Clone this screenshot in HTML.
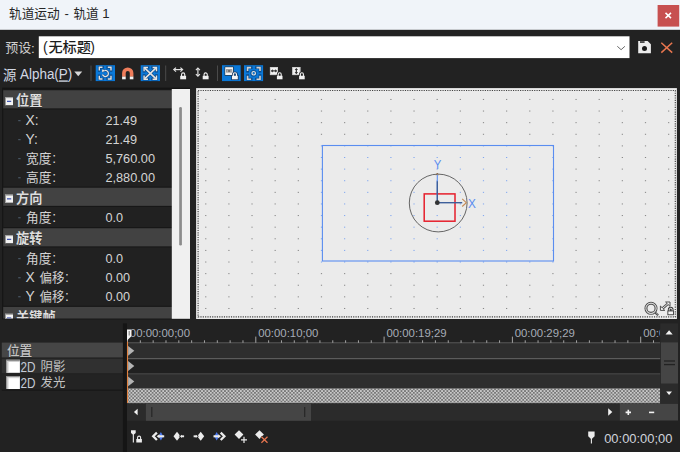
<!DOCTYPE html>
<html lang="zh"><head><meta charset="utf-8"><title>Track Motion</title>
<style>
html,body{margin:0;padding:0;background:#222222;overflow:hidden;}
body{font-family:"Liberation Sans",sans-serif;}
#win{position:relative;width:680px;height:452px;background:#222222;overflow:hidden;}
</style></head><body><div id="win">
<svg width="680" height="452" viewBox="0 0 680 452" font-family="'Liberation Sans', sans-serif" style="position:absolute;left:0;top:0;display:block"><rect x="0" y="0" width="680" height="29.8" fill="#f0f4f9" />
<text x="9" y="18.08" font-size="12.7" fill="#262626" font-family="'Liberation Sans', 'Noto Sans CJK SC', sans-serif">轨道运动</text>
<text x="64.6" y="17.8" font-size="13" fill="#262626" >-</text>
<text x="73.4" y="18.08" font-size="12.7" fill="#262626" font-family="'Liberation Sans', 'Noto Sans CJK SC', sans-serif">轨道</text>
<text x="102.2" y="18.4" font-size="13.2" fill="#262626" >1</text>
<rect x="657.6" y="5" width="21.6" height="21.6" fill="#c75050" />
<path d="M665.5 12.9L671 18.1M671 12.9L665.5 18.1" fill="none" stroke="#ffffff" stroke-width="1.5" />
<text x="5.2" y="52.14" font-size="13" fill="#cfcfcf" font-family="'Liberation Sans', 'Noto Sans CJK SC', sans-serif">预设</text>
<text x="31" y="52.5" font-size="13.5" fill="#cfcfcf" >:</text>
<rect x="38.8" y="36.3" width="590.7" height="21.8" fill="#ffffff" />
<text x="43" y="52.3" font-size="14" fill="#1c1c1c" >(</text>
<text x="48.4" y="52.1" font-size="14.2" font-weight="500" fill="#1c1c1c" font-family="'Liberation Sans', 'Noto Sans CJK SC', sans-serif">无标题</text>
<text x="90.2" y="52.3" font-size="14" fill="#1c1c1c" >)</text>
<path d="M617.3 46.3L621.1 49.7L624.9 46.3" fill="none" stroke="#6a6a6a" stroke-width="1" />
<path d="M638.2 41.1H647.6L650.9 44.3V53.3H638.2Z" fill="#ececec" />
<rect x="640" y="41.2" width="4.6" height="1.7" fill="#3a3a3a" />
<circle cx="644.5" cy="48.6" r="2.5" fill="#1a1a1a"/>
<path d="M661.3 42.8L672.2 52.6M672.2 42.8L661.3 52.6" fill="none" stroke="#e9764f" stroke-width="1.5" />
<text x="3" y="80.09" font-size="13.4" fill="#d2d8e4" font-family="'Liberation Sans', 'Noto Sans CJK SC', sans-serif">源</text>
<text x="20" y="79.4" font-size="13.8" fill="#d2d8e4" textLength="52.3" lengthAdjust="spacingAndGlyphs" >Alpha(<tspan text-decoration="underline">P</tspan>)</text>
<polygon points="74.3,71.4 82.2,71.4 78.25,76.2" fill="#d8d8d8" />
<line x1="91" y1="65.5" x2="91" y2="81" stroke="#4a4a4a" stroke-width="1" />
<line x1="165.7" y1="65.5" x2="165.7" y2="81" stroke="#4a4a4a" stroke-width="1" />
<line x1="217.5" y1="65.5" x2="217.5" y2="81" stroke="#4a4a4a" stroke-width="1" />
<rect x="95.7" y="65.2" width="19.3" height="15.9" fill="#0b79d9" />
<rect x="140.7" y="65.2" width="19.3" height="15.9" fill="#0b79d9" />
<rect x="222" y="65.2" width="18.7" height="15.9" fill="#0b79d9" />
<rect x="244" y="65.2" width="19.1" height="15.9" fill="#0b79d9" />
<path d="M99.3 70.5V67.3H102.5M107.8 67.3H111V70.5M111 75.8V79H107.8M102.5 79H99.3V75.8" fill="none" stroke="#0c3c70" stroke-width="2.7" stroke-linecap="square" opacity="0.75"/>
<path d="M99.3 70.5V67.3H102.5M107.8 67.3H111V70.5M111 75.8V79H107.8M102.5 79H99.3V75.8" fill="none" stroke="#e2e2e2" stroke-width="1.4" />
<path d="M103.2 71.3A3.05 3.05 0 1 1 102.5 74.6" fill="none" stroke="#0c3c70" stroke-width="2.6" opacity="0.7"/>
<path d="M103.2 71.3A3.05 3.05 0 1 1 102.5 74.6" fill="none" stroke="#e2e2e2" stroke-width="1.3" />
<polygon points="101.4,69.2 105.3,69.8 102.2,73" fill="#0c3c70" opacity="0.7"/>
<polygon points="101.9,69.6 105,70 102.4,72.5" fill="#e2e2e2" />
<path d="M123.9 76.7V73.1A3.85 3.85 0 0 1 131.6 73.1V76.7" fill="none" stroke="#ef7d5b" stroke-width="3.6" />
<rect x="122.1" y="76.6" width="3.6" height="2.7" fill="#f2f2f2" />
<rect x="129.8" y="76.6" width="3.6" height="2.7" fill="#f2f2f2" />
<path d="M144.8 68.1L155.8 78.6M155.8 68.1L144.8 78.6" fill="none" stroke="#0c3c70" stroke-width="2.9" opacity="0.75"/>
<path d="M144.1 71.2V67.5H148M152.6 67.5H156.5V71.2M156.5 75.5V79.2H152.6M148 79.2H144.1V75.5" fill="none" stroke="#0c3c70" stroke-width="2.7" stroke-linecap="square" opacity="0.75"/>
<path d="M144.8 68.1L155.8 78.6M155.8 68.1L144.8 78.6" fill="none" stroke="#e2e2e2" stroke-width="1.6" />
<path d="M144.1 71.2V67.5H148M152.6 67.5H156.5V71.2M156.5 75.5V79.2H152.6M148 79.2H144.1V75.5" fill="none" stroke="#e2e2e2" stroke-width="1.4" />
<path d="M174.2 69.6H182.2" fill="none" stroke="#e2e2e2" stroke-width="1.2" />
<path d="M176.0 67.6L173.8 69.6L176.0 71.6M180.4 67.6L182.6 69.6L180.4 71.6" fill="none" stroke="#e2e2e2" stroke-width="1.2" />
<path d="M181.56 76.1V74.49A1.59 1.59 0 0 1 184.74 74.49V76.1" fill="none" stroke="#f0f0f0" stroke-width="1.1" /><rect x="180.2" y="75.8" width="5.9" height="3.5" fill="#f0f0f0" />
<path d="M197.9 68.4V75.8" fill="none" stroke="#e2e2e2" stroke-width="1.2" />
<path d="M195.9 70.1L197.9 68.0L199.9 70.1M195.9 74.1L197.9 76.2L199.9 74.1" fill="none" stroke="#e2e2e2" stroke-width="1.2" />
<path d="M204.06 76.1V74.49A1.59 1.59 0 0 1 207.24 74.49V76.1" fill="none" stroke="#f0f0f0" stroke-width="1.1" /><rect x="202.7" y="75.8" width="5.9" height="3.5" fill="#f0f0f0" />
<rect x="224.6" y="66.6" width="9" height="9" fill="#2a2a2a" />
<rect x="225.2" y="67.2" width="7.8" height="7.8" fill="#f4f4f4" />
<rect x="226" y="69.4" width="6.2" height="3" fill="#6a6a6a" />
<path d="M226.6 69.9L228.6 70.9L226.6 71.9ZM231.6 69.9L229.6 70.9L231.6 71.9Z" fill="#e0e0e0" />
<path d="M233.33 76.05V74.37A1.57 1.57 0 0 1 236.47 74.37V76.05" fill="none" stroke="#1b3b60" stroke-width="2.6" /><rect x="231.2" y="74.95" width="7.4" height="5.15" fill="#1b3b60" /><path d="M233.33 76.05V74.37A1.57 1.57 0 0 1 236.47 74.37V76.05" fill="none" stroke="#f6f6f6" stroke-width="1.1" /><rect x="232" y="75.75" width="5.8" height="3.55" fill="#f6f6f6" />
<path d="M247.6 71.1V67.6H251.1M256.5 67.6H260V71.1M260 75.7V79.2H256.5M251.1 79.2H247.6V75.7" fill="none" stroke="#0c3c70" stroke-width="2.8" stroke-linecap="square" opacity="0.75"/>
<path d="M247.6 71.1V67.6H251.1M256.5 67.6H260V71.1M260 75.7V79.2H256.5M251.1 79.2H247.6V75.7" fill="none" stroke="#d0d0d0" stroke-width="1.6" />
<circle cx="253.6" cy="73.3" r="2.2" fill="none" stroke="#0c3c70" stroke-width="2.3" opacity="0.6"/>
<circle cx="253.7" cy="73.25" r="1.75" fill="none" stroke="#e0e0e0" stroke-width="1.2"/>
<rect x="269.9" y="67" width="8.1" height="8.1" fill="#f2f2f2" />
<rect x="270.4" y="67.5" width="7.1" height="7.1" fill="none" stroke="#c4c4c4" stroke-width="0.7"/>
<path d="M271.6 70.9H276.4" fill="none" stroke="#333" stroke-width="1.2" />
<polygon points="270.7,70.9 272.9,69.2 272.9,72.6" fill="#333" />
<polygon points="277.3,70.9 275.1,69.2 275.1,72.6" fill="#333" />
<path d="M278.19 76.05V74.31A1.51 1.51 0 0 1 281.21 74.31V76.05" fill="none" stroke="#222222" stroke-width="2.6" /><rect x="276.1" y="74.95" width="7.2" height="5.15" fill="#222222" /><path d="M278.19 76.05V74.31A1.51 1.51 0 0 1 281.21 74.31V76.05" fill="none" stroke="#f2f2f2" stroke-width="1.1" /><rect x="276.9" y="75.75" width="5.6" height="3.55" fill="#f2f2f2" />
<rect x="292.3" y="67" width="8.1" height="8.1" fill="#f2f2f2" />
<rect x="292.8" y="67.5" width="7.1" height="7.1" fill="none" stroke="#c4c4c4" stroke-width="0.7"/>
<path d="M296.35 69V73.2" fill="none" stroke="#333" stroke-width="1.2" />
<polygon points="296.35,67.9 294.65,70.1 298.05,70.1" fill="#333" />
<polygon points="296.35,74.3 294.65,72.1 298.05,72.1" fill="#333" />
<path d="M300.39 76.05V74.31A1.51 1.51 0 0 1 303.41 74.31V76.05" fill="none" stroke="#222222" stroke-width="2.6" /><rect x="298.3" y="74.95" width="7.2" height="5.15" fill="#222222" /><path d="M300.39 76.05V74.31A1.51 1.51 0 0 1 303.41 74.31V76.05" fill="none" stroke="#f2f2f2" stroke-width="1.1" /><rect x="299.1" y="75.75" width="5.6" height="3.55" fill="#f2f2f2" />
<rect x="2.2" y="87.6" width="187.8" height="231.8" fill="#141414" />
<rect x="3.2" y="89" width="168.8" height="229.6" fill="#212121" />
<clipPath id="pc"><rect x="0" y="88" width="172" height="230.6"/></clipPath><g clip-path="url(#pc)"><rect x="3.2" y="89.05" width="168.8" height="20.4" fill="#181818" /><rect x="3.2" y="90.25" width="168.8" height="18.1" fill="#424242" /><rect x="5" y="97.15" width="8" height="8" fill="#f2f2f2" /><rect x="5" y="97.15" width="8" height="1" fill="#9a9a9a" /><rect x="5" y="97.15" width="1" height="8" fill="#9a9a9a" /><rect x="7" y="100.75" width="4.2" height="1.2" fill="#3a4fb0" /><text x="16.1" y="105.97" font-size="13.2" font-weight="bold" fill="#111111" opacity="0.55" font-family="'Liberation Sans', 'Noto Sans CJK SC', sans-serif">位置</text><text x="16.1" y="105.37" font-size="13.2" font-weight="bold" fill="#dedede" font-family="'Liberation Sans', 'Noto Sans CJK SC', sans-serif">位置</text><rect x="3.2" y="186.55" width="168.8" height="20.4" fill="#181818" /><rect x="3.2" y="187.75" width="168.8" height="18.1" fill="#424242" /><rect x="5" y="194.65" width="8" height="8" fill="#f2f2f2" /><rect x="5" y="194.65" width="8" height="1" fill="#9a9a9a" /><rect x="5" y="194.65" width="1" height="8" fill="#9a9a9a" /><rect x="7" y="198.25" width="4.2" height="1.2" fill="#3a4fb0" /><text x="16.1" y="203.47" font-size="13.2" font-weight="bold" fill="#111111" opacity="0.55" font-family="'Liberation Sans', 'Noto Sans CJK SC', sans-serif">方向</text><text x="16.1" y="202.87" font-size="13.2" font-weight="bold" fill="#dedede" font-family="'Liberation Sans', 'Noto Sans CJK SC', sans-serif">方向</text><rect x="3.2" y="227.05" width="168.8" height="20.4" fill="#181818" /><rect x="3.2" y="228.25" width="168.8" height="18.1" fill="#424242" /><rect x="5" y="235.15" width="8" height="8" fill="#f2f2f2" /><rect x="5" y="235.15" width="8" height="1" fill="#9a9a9a" /><rect x="5" y="235.15" width="1" height="8" fill="#9a9a9a" /><rect x="7" y="238.75" width="4.2" height="1.2" fill="#3a4fb0" /><text x="16.1" y="243.97" font-size="13.2" font-weight="bold" fill="#111111" opacity="0.55" font-family="'Liberation Sans', 'Noto Sans CJK SC', sans-serif">旋转</text><text x="16.1" y="243.37" font-size="13.2" font-weight="bold" fill="#dedede" font-family="'Liberation Sans', 'Noto Sans CJK SC', sans-serif">旋转</text><rect x="3.2" y="305.7" width="168.8" height="20.4" fill="#181818" /><rect x="3.2" y="306.9" width="168.8" height="18.1" fill="#424242" /><rect x="5" y="313.8" width="8" height="8" fill="#f2f2f2" /><rect x="5" y="313.8" width="8" height="1" fill="#9a9a9a" /><rect x="5" y="313.8" width="1" height="8" fill="#9a9a9a" /><rect x="7" y="317.4" width="4.2" height="1.2" fill="#3a4fb0" /><text x="16.1" y="322.62" font-size="13.2" font-weight="bold" fill="#111111" opacity="0.55" font-family="'Liberation Sans', 'Noto Sans CJK SC', sans-serif">关键帧</text><text x="16.1" y="322.02" font-size="13.2" font-weight="bold" fill="#dedede" font-family="'Liberation Sans', 'Noto Sans CJK SC', sans-serif">关键帧</text><rect x="18.2" y="120.1" width="2.4" height="1.1" fill="#4c5b6a" /><text x="25.6" y="125.2" font-size="13.8" fill="#d4d4d4" >X:</text><text x="105.4" y="125.2" font-size="13.6" fill="#d4d4d4" textLength="31.8" lengthAdjust="spacingAndGlyphs" >21.49</text><rect x="18.2" y="139.1" width="2.4" height="1.1" fill="#4c5b6a" /><text x="25.6" y="144.2" font-size="13.8" fill="#d4d4d4" >Y:</text><text x="105.4" y="144.2" font-size="13.6" fill="#d4d4d4" textLength="31.8" lengthAdjust="spacingAndGlyphs" >21.49</text><rect x="18.2" y="158.1" width="2.4" height="1.1" fill="#4c5b6a" /><text x="26" y="162.78" font-size="12.7" fill="#d4d4d4" font-family="'Liberation Sans', 'Noto Sans CJK SC', sans-serif">宽度</text><text x="52.3" y="163.2" font-size="13.8" fill="#d4d4d4" >:</text><text x="105.4" y="163.2" font-size="13.6" fill="#d4d4d4" textLength="49.6" lengthAdjust="spacingAndGlyphs" >5,760.00</text><rect x="18.2" y="177.2" width="2.4" height="1.1" fill="#4c5b6a" /><text x="26" y="181.88" font-size="12.7" fill="#d4d4d4" font-family="'Liberation Sans', 'Noto Sans CJK SC', sans-serif">高度</text><text x="52.3" y="182.3" font-size="13.8" fill="#d4d4d4" >:</text><text x="105.4" y="182.3" font-size="13.6" fill="#d4d4d4" textLength="49.6" lengthAdjust="spacingAndGlyphs" >2,880.00</text><rect x="18.2" y="217.2" width="2.4" height="1.1" fill="#4c5b6a" /><text x="26" y="221.88" font-size="12.7" fill="#d4d4d4" font-family="'Liberation Sans', 'Noto Sans CJK SC', sans-serif">角度</text><text x="52.3" y="222.3" font-size="13.8" fill="#d4d4d4" >:</text><text x="105.4" y="222.3" font-size="13.6" fill="#d4d4d4" textLength="17.6" lengthAdjust="spacingAndGlyphs" >0.0</text><rect x="18.2" y="258.1" width="2.4" height="1.1" fill="#4c5b6a" /><text x="26" y="262.78" font-size="12.7" fill="#d4d4d4" font-family="'Liberation Sans', 'Noto Sans CJK SC', sans-serif">角度</text><text x="52.3" y="263.2" font-size="13.8" fill="#d4d4d4" >:</text><text x="105.4" y="263.2" font-size="13.6" fill="#d4d4d4" textLength="17.6" lengthAdjust="spacingAndGlyphs" >0.0</text><rect x="18.2" y="277.2" width="2.4" height="1.1" fill="#4c5b6a" /><text x="25.6" y="282.3" font-size="13.8" fill="#d4d4d4" >X</text><text x="39.5" y="281.88" font-size="12.7" fill="#d4d4d4" textLength="25" lengthAdjust="spacingAndGlyphs" font-family="'Liberation Sans', 'Noto Sans CJK SC', sans-serif">偏移</text><text x="65" y="282.3" font-size="13.8" fill="#d4d4d4" >:</text><text x="105.4" y="282.3" font-size="13.6" fill="#d4d4d4" textLength="24.6" lengthAdjust="spacingAndGlyphs" >0.00</text><rect x="18.2" y="296.2" width="2.4" height="1.1" fill="#4c5b6a" /><text x="25.6" y="301.3" font-size="13.8" fill="#d4d4d4" >Y</text><text x="39.5" y="300.88" font-size="12.7" fill="#d4d4d4" textLength="25" lengthAdjust="spacingAndGlyphs" font-family="'Liberation Sans', 'Noto Sans CJK SC', sans-serif">偏移</text><text x="65" y="301.3" font-size="13.8" fill="#d4d4d4" >:</text><text x="105.4" y="301.3" font-size="13.6" fill="#d4d4d4" textLength="24.6" lengthAdjust="spacingAndGlyphs" >0.00</text></g>
<rect x="171.8" y="89" width="18.2" height="229.8" fill="#f0f0f0" />
<rect x="179.2" y="107" width="2.7" height="138.5" fill="#8c8c8c" rx="1.3"/>
<rect x="196.1" y="88.1" width="480.8" height="230.9" fill="#ebebeb" />
<rect x="198.1" y="90.5" width="477.2" height="226.4" fill="none" stroke="#404040" stroke-width="1.15" stroke-dasharray="1.15 1.2"/>
<path d="M205.15 99.45h1.2M205.15 111.06h1.2M205.15 122.67h1.2M205.15 134.29h1.2M205.15 145.9h1.2M205.15 157.51h1.2M205.15 169.12h1.2M205.15 180.73h1.2M205.15 192.35h1.2M205.15 203.96h1.2M205.15 215.57h1.2M205.15 227.18h1.2M205.15 238.79h1.2M205.15 250.41h1.2M205.15 262.02h1.2M205.15 273.63h1.2M205.15 285.24h1.2M205.15 296.85h1.2M205.15 308.47h1.2M228.3 99.45h1.2M228.3 111.06h1.2M228.3 122.67h1.2M228.3 134.29h1.2M228.3 145.9h1.2M228.3 157.51h1.2M228.3 169.12h1.2M228.3 180.73h1.2M228.3 192.35h1.2M228.3 203.96h1.2M228.3 215.57h1.2M228.3 227.18h1.2M228.3 238.79h1.2M228.3 250.41h1.2M228.3 262.02h1.2M228.3 273.63h1.2M228.3 285.24h1.2M228.3 296.85h1.2M228.3 308.47h1.2M251.44 99.45h1.2M251.44 111.06h1.2M251.44 122.67h1.2M251.44 134.29h1.2M251.44 145.9h1.2M251.44 157.51h1.2M251.44 169.12h1.2M251.44 180.73h1.2M251.44 192.35h1.2M251.44 203.96h1.2M251.44 215.57h1.2M251.44 227.18h1.2M251.44 238.79h1.2M251.44 250.41h1.2M251.44 262.02h1.2M251.44 273.63h1.2M251.44 285.24h1.2M251.44 296.85h1.2M251.44 308.47h1.2M274.58 99.45h1.2M274.58 111.06h1.2M274.58 122.67h1.2M274.58 134.29h1.2M274.58 145.9h1.2M274.58 157.51h1.2M274.58 169.12h1.2M274.58 180.73h1.2M274.58 192.35h1.2M274.58 203.96h1.2M274.58 215.57h1.2M274.58 227.18h1.2M274.58 238.79h1.2M274.58 250.41h1.2M274.58 262.02h1.2M274.58 273.63h1.2M274.58 285.24h1.2M274.58 296.85h1.2M274.58 308.47h1.2M297.73 99.45h1.2M297.73 111.06h1.2M297.73 122.67h1.2M297.73 134.29h1.2M297.73 145.9h1.2M297.73 157.51h1.2M297.73 169.12h1.2M297.73 180.73h1.2M297.73 192.35h1.2M297.73 203.96h1.2M297.73 215.57h1.2M297.73 227.18h1.2M297.73 238.79h1.2M297.73 250.41h1.2M297.73 262.02h1.2M297.73 273.63h1.2M297.73 285.24h1.2M297.73 296.85h1.2M297.73 308.47h1.2M320.88 99.45h1.2M320.88 111.06h1.2M320.88 122.67h1.2M320.88 134.29h1.2M320.88 273.63h1.2M320.88 285.24h1.2M320.88 296.85h1.2M320.88 308.47h1.2M344.02 99.45h1.2M344.02 111.06h1.2M344.02 122.67h1.2M344.02 134.29h1.2M344.02 273.63h1.2M344.02 285.24h1.2M344.02 296.85h1.2M344.02 308.47h1.2M367.16 99.45h1.2M367.16 111.06h1.2M367.16 122.67h1.2M367.16 134.29h1.2M367.16 273.63h1.2M367.16 285.24h1.2M367.16 296.85h1.2M367.16 308.47h1.2M390.31 99.45h1.2M390.31 111.06h1.2M390.31 122.67h1.2M390.31 134.29h1.2M390.31 273.63h1.2M390.31 285.24h1.2M390.31 296.85h1.2M390.31 308.47h1.2M413.45 99.45h1.2M413.45 111.06h1.2M413.45 122.67h1.2M413.45 134.29h1.2M413.45 273.63h1.2M413.45 285.24h1.2M413.45 296.85h1.2M413.45 308.47h1.2M436.6 99.45h1.2M436.6 111.06h1.2M436.6 122.67h1.2M436.6 134.29h1.2M436.6 273.63h1.2M436.6 285.24h1.2M436.6 296.85h1.2M436.6 308.47h1.2M459.75 99.45h1.2M459.75 111.06h1.2M459.75 122.67h1.2M459.75 134.29h1.2M459.75 273.63h1.2M459.75 285.24h1.2M459.75 296.85h1.2M459.75 308.47h1.2M482.89 99.45h1.2M482.89 111.06h1.2M482.89 122.67h1.2M482.89 134.29h1.2M482.89 273.63h1.2M482.89 285.24h1.2M482.89 296.85h1.2M482.89 308.47h1.2M506.03 99.45h1.2M506.03 111.06h1.2M506.03 122.67h1.2M506.03 134.29h1.2M506.03 273.63h1.2M506.03 285.24h1.2M506.03 296.85h1.2M506.03 308.47h1.2M529.18 99.45h1.2M529.18 111.06h1.2M529.18 122.67h1.2M529.18 134.29h1.2M529.18 273.63h1.2M529.18 285.24h1.2M529.18 296.85h1.2M529.18 308.47h1.2M552.32 99.45h1.2M552.32 111.06h1.2M552.32 122.67h1.2M552.32 134.29h1.2M552.32 273.63h1.2M552.32 285.24h1.2M552.32 296.85h1.2M552.32 308.47h1.2M575.47 99.45h1.2M575.47 111.06h1.2M575.47 122.67h1.2M575.47 134.29h1.2M575.47 145.9h1.2M575.47 157.51h1.2M575.47 169.12h1.2M575.47 180.73h1.2M575.47 192.35h1.2M575.47 203.96h1.2M575.47 215.57h1.2M575.47 227.18h1.2M575.47 238.79h1.2M575.47 250.41h1.2M575.47 262.02h1.2M575.47 273.63h1.2M575.47 285.24h1.2M575.47 296.85h1.2M575.47 308.47h1.2M598.61 99.45h1.2M598.61 111.06h1.2M598.61 122.67h1.2M598.61 134.29h1.2M598.61 145.9h1.2M598.61 157.51h1.2M598.61 169.12h1.2M598.61 180.73h1.2M598.61 192.35h1.2M598.61 203.96h1.2M598.61 215.57h1.2M598.61 227.18h1.2M598.61 238.79h1.2M598.61 250.41h1.2M598.61 262.02h1.2M598.61 273.63h1.2M598.61 285.24h1.2M598.61 296.85h1.2M598.61 308.47h1.2M621.76 99.45h1.2M621.76 111.06h1.2M621.76 122.67h1.2M621.76 134.29h1.2M621.76 145.9h1.2M621.76 157.51h1.2M621.76 169.12h1.2M621.76 180.73h1.2M621.76 192.35h1.2M621.76 203.96h1.2M621.76 215.57h1.2M621.76 227.18h1.2M621.76 238.79h1.2M621.76 250.41h1.2M621.76 262.02h1.2M621.76 273.63h1.2M621.76 285.24h1.2M621.76 296.85h1.2M621.76 308.47h1.2M644.9 99.45h1.2M644.9 111.06h1.2M644.9 122.67h1.2M644.9 134.29h1.2M644.9 145.9h1.2M644.9 157.51h1.2M644.9 169.12h1.2M644.9 180.73h1.2M644.9 192.35h1.2M644.9 203.96h1.2M644.9 215.57h1.2M644.9 227.18h1.2M644.9 238.79h1.2M644.9 250.41h1.2M644.9 262.02h1.2M644.9 273.63h1.2M644.9 285.24h1.2M644.9 296.85h1.2M644.9 308.47h1.2M668.05 99.45h1.2M668.05 111.06h1.2M668.05 122.67h1.2M668.05 134.29h1.2M668.05 145.9h1.2M668.05 157.51h1.2M668.05 169.12h1.2M668.05 180.73h1.2M668.05 192.35h1.2M668.05 203.96h1.2M668.05 215.57h1.2M668.05 227.18h1.2M668.05 238.79h1.2M668.05 250.41h1.2M668.05 262.02h1.2M668.05 273.63h1.2M668.05 285.24h1.2M668.05 296.85h1.2M668.05 308.47h1.2" fill="none" stroke="#858585" stroke-width="1" />
<path d="M320.88 145.9h1.2M320.88 157.51h1.2M320.88 169.12h1.2M320.88 180.73h1.2M320.88 192.35h1.2M320.88 203.96h1.2M320.88 215.57h1.2M320.88 227.18h1.2M320.88 238.79h1.2M320.88 250.41h1.2M320.88 262.02h1.2M344.02 145.9h1.2M344.02 157.51h1.2M344.02 169.12h1.2M344.02 180.73h1.2M344.02 192.35h1.2M344.02 203.96h1.2M344.02 215.57h1.2M344.02 227.18h1.2M344.02 238.79h1.2M344.02 250.41h1.2M344.02 262.02h1.2M367.16 145.9h1.2M367.16 157.51h1.2M367.16 169.12h1.2M367.16 180.73h1.2M367.16 192.35h1.2M367.16 203.96h1.2M367.16 215.57h1.2M367.16 227.18h1.2M367.16 238.79h1.2M367.16 250.41h1.2M367.16 262.02h1.2M390.31 145.9h1.2M390.31 157.51h1.2M390.31 169.12h1.2M390.31 180.73h1.2M390.31 192.35h1.2M390.31 203.96h1.2M390.31 215.57h1.2M390.31 227.18h1.2M390.31 238.79h1.2M390.31 250.41h1.2M390.31 262.02h1.2M413.45 145.9h1.2M413.45 157.51h1.2M413.45 169.12h1.2M413.45 180.73h1.2M413.45 192.35h1.2M413.45 203.96h1.2M413.45 215.57h1.2M413.45 227.18h1.2M413.45 238.79h1.2M413.45 250.41h1.2M413.45 262.02h1.2M436.6 145.9h1.2M436.6 157.51h1.2M436.6 169.12h1.2M436.6 180.73h1.2M436.6 192.35h1.2M436.6 203.96h1.2M436.6 215.57h1.2M436.6 227.18h1.2M436.6 238.79h1.2M436.6 250.41h1.2M436.6 262.02h1.2M459.75 145.9h1.2M459.75 157.51h1.2M459.75 169.12h1.2M459.75 180.73h1.2M459.75 192.35h1.2M459.75 203.96h1.2M459.75 215.57h1.2M459.75 227.18h1.2M459.75 238.79h1.2M459.75 250.41h1.2M459.75 262.02h1.2M482.89 145.9h1.2M482.89 157.51h1.2M482.89 169.12h1.2M482.89 180.73h1.2M482.89 192.35h1.2M482.89 203.96h1.2M482.89 215.57h1.2M482.89 227.18h1.2M482.89 238.79h1.2M482.89 250.41h1.2M482.89 262.02h1.2M506.03 145.9h1.2M506.03 157.51h1.2M506.03 169.12h1.2M506.03 180.73h1.2M506.03 192.35h1.2M506.03 203.96h1.2M506.03 215.57h1.2M506.03 227.18h1.2M506.03 238.79h1.2M506.03 250.41h1.2M506.03 262.02h1.2M529.18 145.9h1.2M529.18 157.51h1.2M529.18 169.12h1.2M529.18 180.73h1.2M529.18 192.35h1.2M529.18 203.96h1.2M529.18 215.57h1.2M529.18 227.18h1.2M529.18 238.79h1.2M529.18 250.41h1.2M529.18 262.02h1.2M552.32 145.9h1.2M552.32 157.51h1.2M552.32 169.12h1.2M552.32 180.73h1.2M552.32 192.35h1.2M552.32 203.96h1.2M552.32 215.57h1.2M552.32 227.18h1.2M552.32 238.79h1.2M552.32 250.41h1.2M552.32 262.02h1.2" fill="none" stroke="#7fa6f0" stroke-width="1" />
<rect x="322.4" y="145.5" width="231.1" height="115.5" fill="none" stroke="#5a8df0" stroke-width="1.1"/>
<circle cx="438.2" cy="203" r="28.9" fill="none" stroke="#5e5e5e" stroke-width="0.95"/>
<rect x="424.2" y="193.9" width="30.8" height="27.3" fill="none" stroke="#e61f2c" stroke-width="1.5"/>
<line x1="437.3" y1="202.7" x2="437.3" y2="174.4" stroke="#5a8df0" stroke-width="1.1" />
<line x1="437.3" y1="202.7" x2="437.3" y2="181.2" stroke="#3d5f9a" stroke-width="1.4" />
<line x1="437.3" y1="202.7" x2="462.2" y2="202.7" stroke="#3d5f9a" stroke-width="1.4" />
<path d="M462.2 198.9L466.3 202.7L462.2 206.5" fill="none" stroke="#c48a55" stroke-width="1.1" />
<path d="M436.2 175.2L437.3 173.0L438.4 175.2" fill="none" stroke="#8a6a4a" stroke-width="0.9" />
<circle cx="437.3" cy="202.7" r="2.4" fill="#333333"/>
<text x="433.7" y="168.7" font-size="12.6" fill="#5a8df0" textLength="7.6" lengthAdjust="spacingAndGlyphs" >Y</text>
<text x="467.9" y="207.5" font-size="12.9" fill="#5a8df0" textLength="7.9" lengthAdjust="spacingAndGlyphs" >X</text>
<circle cx="651" cy="308.3" r="6.0" fill="none" stroke="#505050" stroke-width="1.1"/>
<circle cx="651" cy="308.3" r="5.05" fill="none" stroke="#dadada" stroke-width="0.9"/>
<circle cx="651" cy="308.3" r="4.1" fill="none" stroke="#505050" stroke-width="1.1"/>
<line x1="655.2" y1="312.6" x2="658.2" y2="315.3" stroke="#505050" stroke-width="2.1" />
<line x1="655.9" y1="312.7" x2="657.9" y2="314.5" stroke="#c8c8c8" stroke-width="0.6" />
<path d="M661.6 309.2L668.8 303.0" fill="none" stroke="#505050" stroke-width="2.6" />
<polygon points="665.6,302 670,302 670,306.4" fill="#f4f4f4" stroke="#505050" stroke-width="1"/>
<polygon points="660.4,306 660.4,310.4 664.8,310.4" fill="#f4f4f4" stroke="#505050" stroke-width="1"/>
<path d="M662.2 308.7L668.2 303.5" fill="none" stroke="#f4f4f4" stroke-width="0.9" />
<path d="M669.25 311V309.7A1.45 1.45 0 0 1 672.15 309.7V311" fill="none" stroke="#3a3a3a" stroke-width="2.8" />
<path d="M669.25 311V309.7A1.45 1.45 0 0 1 672.15 309.7V311" fill="none" stroke="#f4f4f4" stroke-width="1" />
<rect x="667.4" y="310.5" width="6.5" height="4.7" fill="#3a3a3a" />
<rect x="668.3" y="311.4" width="4.7" height="2.9" fill="#f4f4f4" />
<rect x="1.8" y="342.6" width="121.2" height="14.8" fill="#464646" />
<rect x="1.8" y="358.8" width="121.2" height="14.3" fill="#303030" />
<rect x="1.8" y="374.2" width="121.2" height="15.5" fill="#232323" />
<line x1="1.8" y1="390.2" x2="123" y2="390.2" stroke="#161616" stroke-width="1" />
<text x="7" y="355.66" font-size="12.8" font-weight="500" fill="#1a1a1a" opacity="0.5" textLength="25.2" lengthAdjust="spacingAndGlyphs" font-family="'Liberation Sans', 'Noto Sans CJK SC', sans-serif">位置</text>
<text x="7" y="355.06" font-size="12.8" font-weight="500" fill="#c4c4c4" textLength="25.2" lengthAdjust="spacingAndGlyphs" font-family="'Liberation Sans', 'Noto Sans CJK SC', sans-serif">位置</text>
<rect x="6.3" y="359.8" width="13.6" height="13" fill="#ffffff" />
<rect x="6.3" y="359.8" width="13.6" height="1.2" fill="#8e8e8e" />
<rect x="6.3" y="359.8" width="1.2" height="13" fill="#8e8e8e" />
<rect x="7.5" y="361" width="12.4" height="1" fill="#cfcfcf" />
<rect x="7.5" y="361" width="1" height="11.8" fill="#cfcfcf" />
<rect x="6.3" y="376" width="13.6" height="13" fill="#ffffff" />
<rect x="6.3" y="376" width="13.6" height="1.2" fill="#8e8e8e" />
<rect x="6.3" y="376" width="1.2" height="13" fill="#8e8e8e" />
<rect x="7.5" y="377.2" width="12.4" height="1" fill="#cfcfcf" />
<rect x="7.5" y="377.2" width="1" height="11.8" fill="#cfcfcf" />
<text x="20.4" y="372" font-size="14" fill="#c4cad6" textLength="15" lengthAdjust="spacingAndGlyphs" >2D</text>
<text x="40.6" y="370.81" font-size="12.4" fill="#c4c4c4" font-family="'Liberation Sans', 'Noto Sans CJK SC', sans-serif">阴影</text>
<text x="20.4" y="388.1" font-size="14" fill="#c4cad6" textLength="15" lengthAdjust="spacingAndGlyphs" >2D</text>
<text x="40.6" y="386.91" font-size="12.4" fill="#c4c4c4" font-family="'Liberation Sans', 'Noto Sans CJK SC', sans-serif">发光</text>
<rect x="122.9" y="323.4" width="4.1" height="128.6" fill="#151515" />
<rect x="127" y="343.2" width="533.2" height="14.8" fill="#2e2e2e" />
<rect x="127" y="359.2" width="533.2" height="13.8" fill="#202020" />
<rect x="127" y="374.4" width="533.2" height="14.2" fill="#2e2e2e" />
<line x1="127" y1="342.8" x2="660.2" y2="342.8" stroke="#5a5a5a" stroke-width="1" />
<line x1="127" y1="358.6" x2="660.2" y2="358.6" stroke="#5c5c5c" stroke-width="1.1" />
<line x1="127" y1="373.8" x2="660.2" y2="373.8" stroke="#474747" stroke-width="1.3" />
<path d="M127.5 336.6V342.8M140.33 340.3V342.8M153.16 340.3V342.8M165.99 340.3V342.8M178.82 340.3V342.8M191.65 340.3V342.8M204.48 340.3V342.8M217.31 340.3V342.8M230.14 340.3V342.8M242.97 340.3V342.8M255.8 336.6V342.8M268.63 340.3V342.8M281.46 340.3V342.8M294.29 340.3V342.8M307.12 340.3V342.8M319.95 340.3V342.8M332.78 340.3V342.8M345.61 340.3V342.8M358.44 340.3V342.8M371.27 340.3V342.8M384.1 336.6V342.8M396.93 340.3V342.8M409.76 340.3V342.8M422.59 340.3V342.8M435.42 340.3V342.8M448.25 340.3V342.8M461.08 340.3V342.8M473.91 340.3V342.8M486.74 340.3V342.8M499.57 340.3V342.8M512.4 336.6V342.8M525.23 340.3V342.8M538.06 340.3V342.8M550.89 340.3V342.8M563.72 340.3V342.8M576.55 340.3V342.8M589.38 340.3V342.8M602.21 340.3V342.8M615.04 340.3V342.8M627.87 340.3V342.8M640.7 336.6V342.8M653.53 340.3V342.8" fill="none" stroke="#b4b4b4" stroke-width="0.9" />
<clipPath id="rc"><rect x="131.3" y="323" width="528.9" height="20"/></clipPath>
<g clip-path="url(#rc)"><text x="129.8" y="337.4" font-size="11.3" fill="#a6acb6" textLength="60.2" lengthAdjust="spacingAndGlyphs" >00:00:00;00</text><text x="258.2" y="337.4" font-size="11.3" fill="#a6acb6" textLength="60.2" lengthAdjust="spacingAndGlyphs" >00:00:10;00</text><text x="386.4" y="337.4" font-size="11.3" fill="#a6acb6" textLength="60.2" lengthAdjust="spacingAndGlyphs" >00:00:19;29</text><text x="514.7" y="337.4" font-size="11.3" fill="#a6acb6" textLength="60.2" lengthAdjust="spacingAndGlyphs" >00:00:29;29</text><text x="643.2" y="337.4" font-size="11.3" fill="#a6acb6" textLength="60.2" lengthAdjust="spacingAndGlyphs" >00:00:39;29</text></g>
<pattern id="ck" x="127" y="388.4" width="3.53" height="3.53" patternUnits="userSpaceOnUse"><rect width="3.53" height="3.53" fill="#c9c9c9"/><rect width="1.765" height="1.765" fill="#767676"/><rect x="1.765" y="1.765" width="1.765" height="1.765" fill="#767676"/></pattern>
<rect x="127" y="388.4" width="533.2" height="14.9" fill="url(#ck)" />
<line x1="127.5" y1="341.5" x2="127.5" y2="403" stroke="#e0813f" stroke-width="1.1" />
<polygon points="127,329.5 131.4,329.5 131.4,336.2 127,340.6" fill="#f4f4f4" />
<line x1="129.2" y1="331" x2="129.2" y2="335.5" stroke="#555" stroke-width="0.8" />
<polygon points="128.1,345.9 134.3,350.8 128.1,355.7" fill="#b4b4b4" />
<polygon points="128.1,361.1 134.3,366 128.1,370.9" fill="#b4b4b4" />
<polygon points="128.1,376.5 134.3,381.4 128.1,386.3" fill="#b4b4b4" />
<rect x="660.2" y="323.4" width="17.8" height="18.9" fill="#2b2b2b" />
<rect x="660.8" y="342.3" width="17.2" height="41.5" fill="#454545" />
<rect x="660.2" y="383.8" width="17.8" height="19.8" fill="#2b2b2b" />
<polygon points="665.5,334.4 672.7,334.4 669.1,330.3" fill="#f2f2f2" />
<polygon points="666.2,391.6 672,391.6 669.1,395" fill="#f2f2f2" />
<line x1="664" y1="361" x2="675" y2="361" stroke="#222222" stroke-width="1.3" />
<line x1="664" y1="364.6" x2="675" y2="364.6" stroke="#222222" stroke-width="1.3" />
<rect x="127" y="403.6" width="492.8" height="17.2" fill="#2b2b2b" />
<rect x="145.9" y="403.6" width="165.1" height="17.2" fill="#454545" />
<rect x="619.8" y="403.8" width="58.2" height="16.7" fill="#454545" />
<line x1="151.8" y1="407" x2="151.8" y2="417" stroke="#262626" stroke-width="1.2" />
<line x1="304.7" y1="407" x2="304.7" y2="417" stroke="#262626" stroke-width="1.2" />
<polygon points="137.6,408.8 137.6,415.2 133.9,412" fill="#f2f2f2" />
<polygon points="608.2,408.2 608.2,415.8 612.3,412" fill="#f2f2f2" />
<path d="M625.6 412.4H631M628.3 409.7V415.1" fill="none" stroke="#f2f2f2" stroke-width="1.6" />
<path d="M649 412.4H654.2" fill="none" stroke="#f2f2f2" stroke-width="1.6" />
<path d="M131 430.3H135.7V433L133.9 434.6H132.8L131 433Z" fill="#ececec" />
<line x1="133.35" y1="434" x2="133.35" y2="442.6" stroke="#ececec" stroke-width="1.1" />
<path d="M137.59 439.3V437.61A1.51 1.51 0 0 1 140.61 437.61V439.3" fill="none" stroke="#ececec" stroke-width="1.1" /><rect x="136.3" y="439" width="5.6" height="3.5" fill="#ececec" />
<polygon points="158.5,436.3 160.9,432.1 163.3,436.3 160.9,440.5" fill="#4a78ee" />
<path d="M156.9 432.6L153.2 436.3L156.9 440" fill="none" stroke="#ececec" stroke-width="2.3" />
<polygon points="156.6,436.3 159.4,434.3 159.4,438.3" fill="#ececec" />
<path d="M158.6 436.3H164.2" fill="none" stroke="#ececec" stroke-width="2.1" />
<polygon points="173.5,436.3 177,431.8 180.5,436.3 177,440.8" fill="#ececec" />
<path d="M180.5 434.8L179.5 436.3L180.5 437.8" fill="none" stroke="#222222" stroke-width="0.8" />
<polygon points="180,436.3 181.9,434.7 181.9,437.9" fill="#ececec" />
<path d="M181 436.3H184.1" fill="none" stroke="#ececec" stroke-width="1.9" />
<polygon points="197.2,436.3 200.7,431.8 204.2,436.3 200.7,440.8" fill="#ececec" />
<path d="M197.2 434.8L198.2 436.3L197.2 437.8" fill="none" stroke="#222222" stroke-width="0.8" />
<polygon points="197.7,436.3 195.8,434.7 195.8,437.9" fill="#ececec" />
<path d="M193.6 436.3H196.7" fill="none" stroke="#ececec" stroke-width="1.9" />
<polygon points="214.3,436.3 216.7,432.1 219.1,436.3 216.7,440.5" fill="#4a78ee" />
<path d="M220.7 432.6L224.4 436.3L220.7 440" fill="none" stroke="#ececec" stroke-width="2.3" />
<polygon points="221,436.3 218.2,434.3 218.2,438.3" fill="#ececec" />
<path d="M213.5 436.3H219.0" fill="none" stroke="#ececec" stroke-width="2.1" />
<polygon points="234.6,434.6 239,430.3 243.4,434.6 239,438.9" fill="#ececec" />
<path d="M240.6 439.85H247.4M244.0 436.4V443.3" fill="none" stroke="#222222" stroke-width="2.6" />
<path d="M241.0 439.85H247.0M244.0 436.8V442.9" fill="none" stroke="#ececec" stroke-width="1.2" />
<polygon points="255.1,434.6 259.5,430.3 263.9,434.6 259.5,438.9" fill="#ececec" />
<path d="M261.3 436.6L267.6 442.8M267.6 436.6L261.3 442.8" fill="none" stroke="#222222" stroke-width="2.4" />
<path d="M261.4 436.7L267.5 442.7M267.5 436.7L261.4 442.7" fill="none" stroke="#e9764f" stroke-width="1.2" />
<path d="M588.2 431.4H594.6V436.2L592 438.8H590.8L588.2 436.2Z" fill="#ececec" />
<line x1="591.4" y1="438" x2="591.4" y2="443.4" stroke="#ececec" stroke-width="1.1" />
<text x="604.2" y="442.5" font-size="13.4" fill="#cfd4dc" textLength="68.2" lengthAdjust="spacingAndGlyphs" >00:00:00;00</text></svg>
</div></body></html>
